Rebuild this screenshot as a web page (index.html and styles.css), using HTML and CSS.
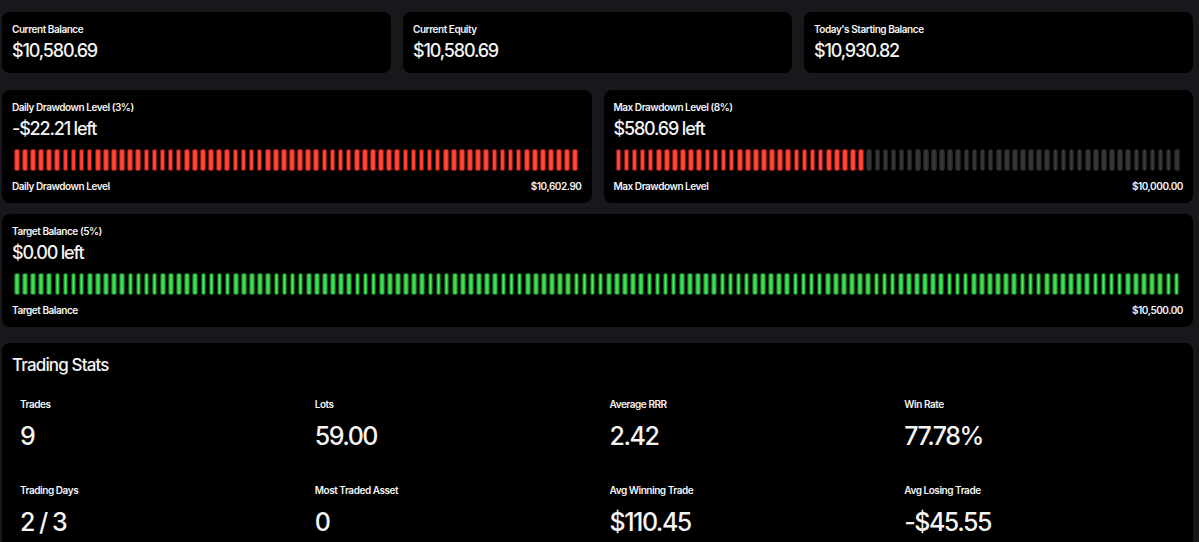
FILE: index.html
```html
<!DOCTYPE html>
<html lang="en">
<head>
    <meta charset="UTF-8">
    <meta name="viewport" content="width=device-width, initial-scale=1.0">
    <title>Account Overview</title>
    <link rel="stylesheet" href="styles.css">
</head>
<body>
    <main class="dashboard">
        <section class="row row-3">
            <div class="card">
                <p class="label">Current Balance</p>
                <p class="value">$10,580.69</p>
            </div>
            <div class="card">
                <p class="label">Current Equity</p>
                <p class="value">$10,580.69</p>
            </div>
            <div class="card">
                <p class="label">Today's Starting Balance</p>
                <p class="value">$10,930.82</p>
            </div>
        </section>

        <section class="row row-2">
            <div class="card">
                <p class="label">Daily Drawdown Level (3%)</p>
                <p class="value">-$22.21 left</p>
                <div class="meter red" data-total="70" data-filled="70"></div>
                <div class="meter-foot">
                    <span>Daily Drawdown Level</span>
                    <span>$10,602.90</span>
                </div>
            </div>
            <div class="card">
                <p class="label">Max Drawdown Level (8%)</p>
                <p class="value">$580.69 left</p>
                <div class="meter red" data-total="70" data-filled="31"></div>
                <div class="meter-foot">
                    <span>Max Drawdown Level</span>
                    <span>$10,000.00</span>
                </div>
            </div>
        </section>

        <section class="row row-1">
            <div class="card">
                <p class="label">Target Balance (5%)</p>
                <p class="value">$0.00 left</p>
                <div class="meter green" data-total="144" data-filled="144"></div>
                <div class="meter-foot">
                    <span>Target Balance</span>
                    <span>$10,500.00</span>
                </div>
            </div>
        </section>

        <section class="card stats">
            <h2>Trading Stats</h2>
            <div class="stats-grid">
                <div class="stat">
                    <p class="label">Trades</p>
                    <p class="stat-value">9</p>
                </div>
                <div class="stat">
                    <p class="label">Lots</p>
                    <p class="stat-value">59.00</p>
                </div>
                <div class="stat">
                    <p class="label">Average RRR</p>
                    <p class="stat-value">2.42</p>
                </div>
                <div class="stat">
                    <p class="label">Win Rate</p>
                    <p class="stat-value">77.78%</p>
                </div>
                <div class="stat">
                    <p class="label">Trading Days</p>
                    <p class="stat-value">2 / 3</p>
                </div>
                <div class="stat">
                    <p class="label">Most Traded Asset</p>
                    <p class="stat-value">0</p>
                </div>
                <div class="stat">
                    <p class="label">Avg Winning Trade</p>
                    <p class="stat-value">$110.45</p>
                </div>
                <div class="stat">
                    <p class="label">Avg Losing Trade</p>
                    <p class="stat-value">-$45.55</p>
                </div>
            </div>
        </section>
    </main>

    <script>
        // Segmented meters: build the ticks, light up the filled ones
        document.querySelectorAll('.meter').forEach(function (meter) {
            const total = parseInt(meter.dataset.total, 10);
            const filled = parseInt(meter.dataset.filled, 10);

            for (let i = 0; i < total; i++) {
                const tick = document.createElement('span');
                tick.className = i < filled ? 'tick on' : 'tick';
                meter.appendChild(tick);
            }
        });
    </script>
</body>
</html>
```

FILE: styles.css
```css
body {
    margin: 0;
    padding: 12px 6px 0 2px;
    background: #17181c;
    color: #f4f4f5;
    font-family: Inter, "Noto Sans", Arial, sans-serif;
}

p, h2 {
    margin: 0;
}

.row {
    display: grid;
    gap: 12px;
}

.row-3 {
    grid-template-columns: repeat(3, 1fr);
    margin-bottom: 17px;
}

.row-2 {
    grid-template-columns: repeat(2, 1fr);
    margin-bottom: 11px;
}

.row-1 {
    margin-bottom: 16px;
}

.card {
    background: #000;
    border-radius: 8px;
    padding: 10px;
}

.label {
    font-size: 10px;
    line-height: 14px;
    font-weight: 600;
    letter-spacing: -0.045em;
}

.value {
    margin-top: 3px;
    font-size: 18px;
    line-height: 24px;
    font-weight: 500;
    letter-spacing: -0.065em;
}

/* segmented progress bars */
.meter {
    display: flex;
    gap: 2.5px;
    height: 22px;
    margin-top: 8px;
    padding: 0 3px 0 2px;
}

.tick {
    flex: 1;
    min-width: 0;
    box-sizing: border-box;
    border-radius: 2px;
    border: 1px solid #1f1f1f;
    background: linear-gradient(90deg, #2c2c2c, #3a3a3a 50%, #2c2c2c);
}

.meter.red .tick.on {
    border-color: #8a1a10;
    background: linear-gradient(90deg, #f5301c, #ff5148 50%, #f5301c);
}

.meter.green .tick.on {
    border-color: #0d5e18;
    background: linear-gradient(90deg, #1aae2f, #55e664 50%, #1aae2f);
}

.meter-foot {
    display: flex;
    justify-content: space-between;
    margin-top: 8px;
    font-size: 10px;
    line-height: 14px;
    font-weight: 600;
    letter-spacing: -0.045em;
}

.stats h2 {
    font-size: 17px;
    line-height: 24px;
    font-weight: 500;
    letter-spacing: -0.05em;
}

.stats-grid {
    display: grid;
    grid-template-columns: repeat(4, 1fr);
    column-gap: 8px;
    row-gap: 31px;
    margin-top: 20px;
}

.stat {
    padding-left: 8px;
}

.stat-value {
    margin-top: 9px;
    font-size: 25px;
    line-height: 32px;
    font-weight: 500;
    letter-spacing: -0.06em;
}
```
